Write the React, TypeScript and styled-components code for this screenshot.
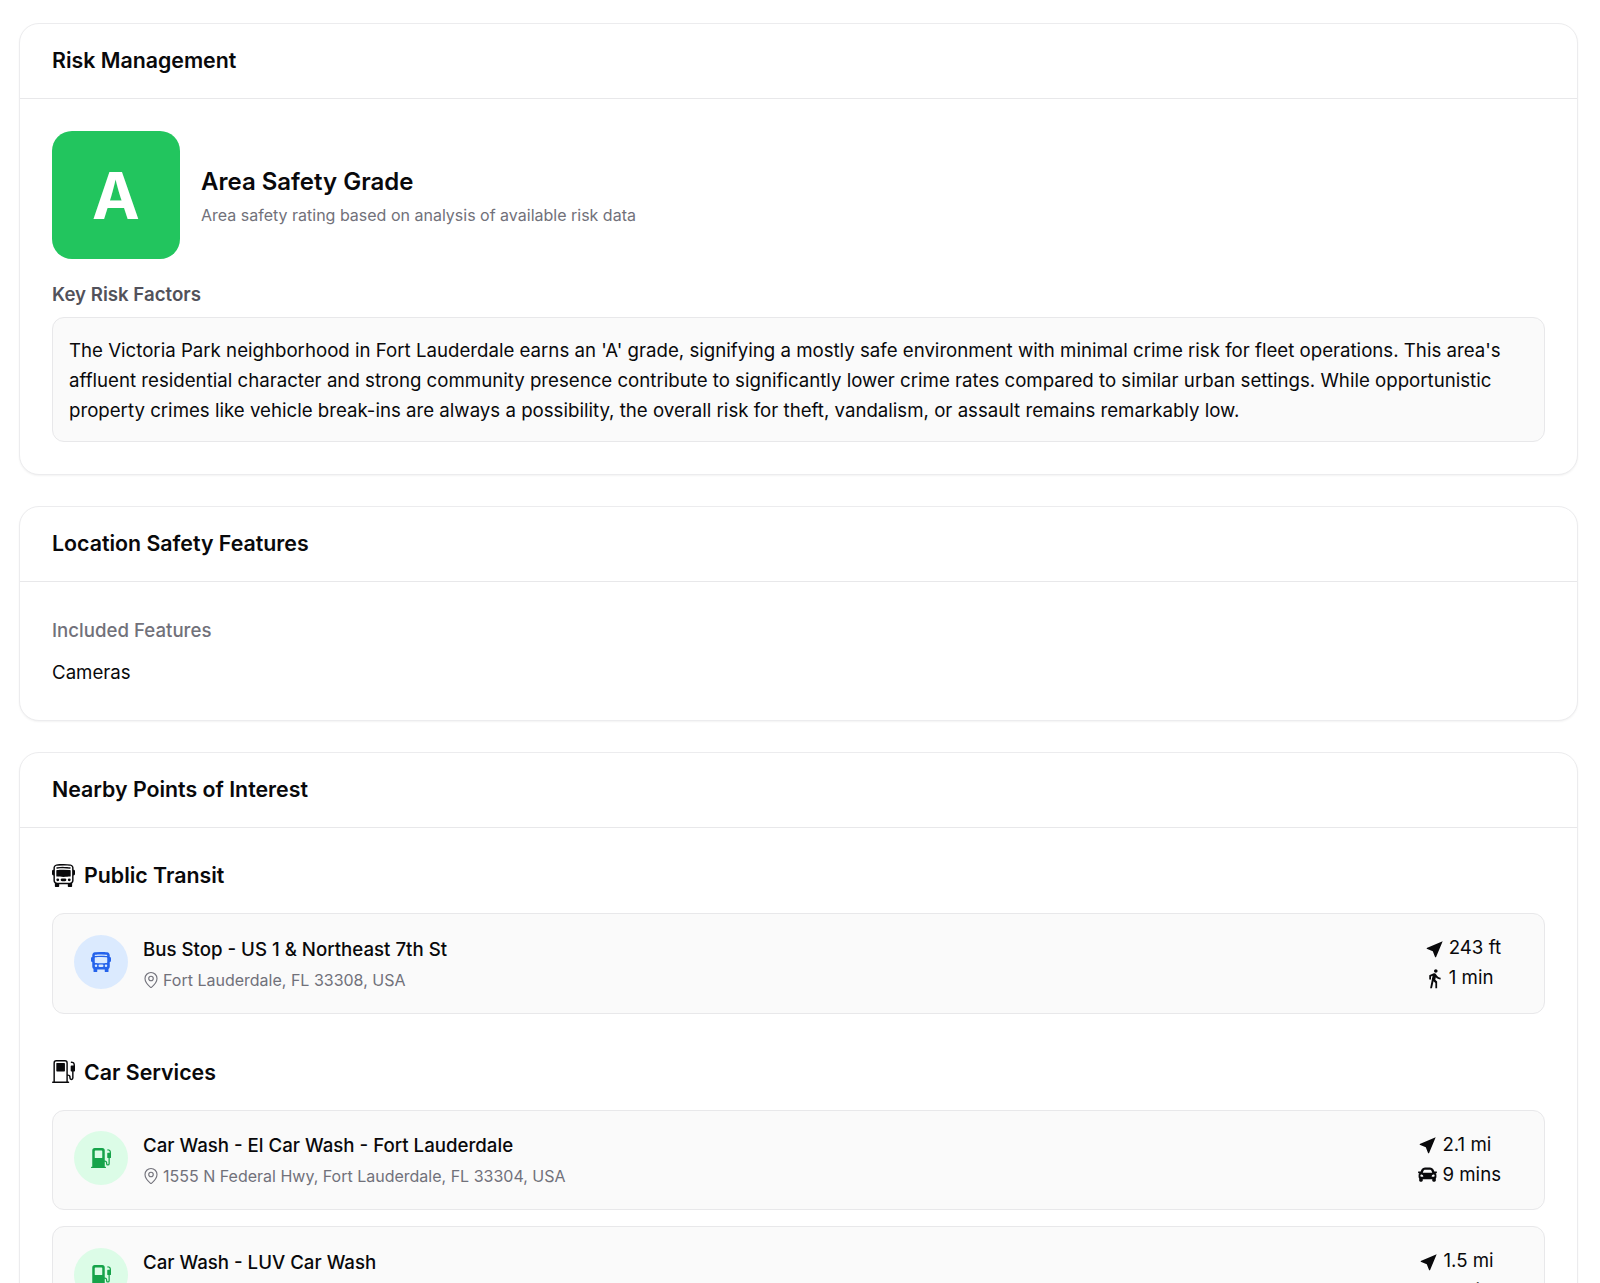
import React from "react";
import { BsBusFront, BsBusFrontFill, BsFuelPump, BsFuelPumpFill } from "react-icons/bs";
import { FaCar } from "react-icons/fa";
import { MdDirectionsWalk, MdNavigation } from "react-icons/md";
import { MapPin } from "lucide-react";
import styled, { createGlobalStyle } from "styled-components";

const GlobalStyle = createGlobalStyle`
  html, body {
    margin: 0;
    height: 1283px;
    overflow: hidden;
    background: #fff;
    font-family: Inter, "Liberation Sans", sans-serif;
    color: #09090b;
  }
  * { box-sizing: border-box; }
`;

const Page = styled.div`
  display: flex;
  flex-direction: column;
  gap: 31px;
  padding: 23px 22px 0 19px;
`;

const Card = styled.section`
  border: 1px solid #ececee;
  border-radius: 20px;
  box-shadow: 0 1px 2px rgba(0, 0, 0, 0.05);
  background: #fff;
`;

const CardHeader = styled.header`
  padding: 21px 32px;
  height: 75px;
  border-bottom: 1px solid #e8e8ea;
  font-size: 21.33px;
  line-height: 30px;
  font-weight: 600;
`;

const CardBody = styled.div`
  padding: 32px;
`;

const GradeRow = styled.div`
  display: flex;
  align-items: center;
  gap: 21px;
`;

const GradeBox = styled.div`
  width: 128px;
  height: 128px;
  border-radius: 20px;
  background: #22c55e;
  color: #fff;
  font-size: 64px;
  font-weight: 700;
  display: flex;
  align-items: center;
  justify-content: center;
`;

const GradeText = styled.div`
  padding-top: 2px;
`;

const GradeTitle = styled.div`
  font-size: 24px;
  line-height: 32px;
  font-weight: 600;
`;

const GradeNote = styled.div`
  margin-top: 5px;
  font-size: 16px;
  line-height: 24px;
  color: #71717a;
`;

const FactorsLabel = styled.div`
  margin-top: 22px;
  font-size: 18.67px;
  line-height: 28px;
  font-weight: 600;
  color: #52525b;
`;

const FactorsBox = styled.div`
  margin-top: 8px;
  padding: 18px 16px 15px 16px;
  border: 1px solid #e8e8ea;
  border-radius: 12px;
  background: #fafafa;
  font-size: 18.67px;
  line-height: 30px;
`;

const FeaturesLabel = styled.div`
  font-size: 18.67px;
  line-height: 28px;
  font-weight: 500;
  color: #71717a;
  margin-top: 3px;
`;

const FeatureValue = styled.div`
  margin: 14px 0 1px;
  font-size: 18.67px;
  line-height: 28px;
`;

const GroupTitle = styled.h3<{ $first?: boolean }>`
  display: flex;
  align-items: center;
  gap: 9px;
  margin: ${(p) => (p.$first ? "-1px" : "42px")} 0 22px;
  font-size: 21.33px;
  line-height: 32px;
  font-weight: 600;
`;

const PlaceList = styled.div`
  display: flex;
  flex-direction: column;
  gap: 16px;
`;

const Place = styled.div`
  display: flex;
  align-items: center;
  gap: 15px;
  height: 100.5px;
  padding: 0 43px 0 21px;
  border: 1px solid #e8e8ea;
  border-radius: 12px;
  background: #fafafa;
`;

const IconCircle = styled.div<{ $bg: string; $fg: string }>`
  flex: none;
  width: 54px;
  height: 54px;
  margin-bottom: 3px;
  border-radius: 50%;
  display: flex;
  align-items: center;
  justify-content: center;
  font-size: 20px;
  background: ${(p) => p.$bg};
  color: ${(p) => p.$fg};
`;

const PlaceText = styled.div`
  flex: 1;
  padding-top: 1px;
`;

const PlaceName = styled.div`
  font-size: 18.67px;
  line-height: 28px;
  font-weight: 500;
`;

const PlaceAddress = styled.div`
  display: flex;
  align-items: center;
  gap: 3px;
  margin-top: 4px;
  font-size: 16px;
  line-height: 24px;
  color: #71717a;
`;

const AddressPin = styled(MapPin)`
  margin-left: -1px;
`;

const Metrics = styled.div`
  display: grid;
  grid-template-columns: auto auto;
  column-gap: 4px;
  row-gap: 2px;
  align-items: center;
  font-size: 18.67px;
  line-height: 28px;
  justify-items: center;
`;

const MetricValue = styled.span`
  justify-self: start;
`;

const NavArrow = styled(MdNavigation)`
  transform: translate(2px, -1px) rotate(45deg);
`;

type PlaceInfo = {
  name: string;
  address: string;
  distance: string;
  duration: string;
  mode: "walk" | "car";
};

const transit: PlaceInfo[] = [
  {
    name: "Bus Stop - US 1 & Northeast 7th St",
    address: "Fort Lauderdale, FL 33308, USA",
    distance: "243 ft",
    duration: "1 min",
    mode: "walk",
  },
];

const carServices: PlaceInfo[] = [
  {
    name: "Car Wash - El Car Wash - Fort Lauderdale",
    address: "1555 N Federal Hwy, Fort Lauderdale, FL 33304, USA",
    distance: "2.1 mi",
    duration: "9 mins",
    mode: "car",
  },
  {
    name: "Car Wash - LUV Car Wash",
    address: "Fort Lauderdale, FL, USA",
    distance: "1.5 mi",
    duration: "7 mins",
    mode: "car",
  },
];

function PlaceRow({ place, icon }: { place: PlaceInfo; icon: React.ReactNode }) {
  return (
    <Place>
      {icon}
      <PlaceText>
        <PlaceName>{place.name}</PlaceName>
        <PlaceAddress>
          <AddressPin size={18} strokeWidth={1.5} />
          {place.address}
        </PlaceAddress>
      </PlaceText>
      <Metrics>
        <NavArrow size={21} />
        <MetricValue>{place.distance}</MetricValue>
        {place.mode === "walk" ? <MdDirectionsWalk size={21} /> : <FaCar size={19} />}
        <MetricValue>{place.duration}</MetricValue>
      </Metrics>
    </Place>
  );
}

export default function App() {
  return (
    <Page>
      <GlobalStyle />
      <Card>
        <CardHeader>Risk Management</CardHeader>
        <CardBody>
          <GradeRow>
            <GradeBox>A</GradeBox>
            <GradeText>
              <GradeTitle>Area Safety Grade</GradeTitle>
              <GradeNote>Area safety rating based on analysis of available risk data</GradeNote>
            </GradeText>
          </GradeRow>
          <FactorsLabel>Key Risk Factors</FactorsLabel>
          <FactorsBox>
            The Victoria Park neighborhood in Fort Lauderdale earns an 'A' grade, signifying a mostly safe
            environment with minimal crime risk for fleet operations. This area's affluent residential character
            and strong community presence contribute to significantly lower crime rates compared to similar urban
            settings. While opportunistic property crimes like vehicle break-ins are always a possibility, the
            overall risk for theft, vandalism, or assault remains remarkably low.
          </FactorsBox>
        </CardBody>
      </Card>
      <Card>
        <CardHeader>Location Safety Features</CardHeader>
        <CardBody>
          <FeaturesLabel>Included Features</FeaturesLabel>
          <FeatureValue>Cameras</FeatureValue>
        </CardBody>
      </Card>
      <Card>
        <CardHeader>Nearby Points of Interest</CardHeader>
        <CardBody>
          <GroupTitle $first>
            <BsBusFront size={23} />
            Public Transit
          </GroupTitle>
          <PlaceList>
            {transit.map((p) => (
              <PlaceRow
                key={p.name}
                place={p}
                icon={
                  <IconCircle $bg="#dbeafe" $fg="#2563eb">
                    <BsBusFrontFill />
                  </IconCircle>
                }
              />
            ))}
          </PlaceList>
          <GroupTitle>
            <BsFuelPump size={23} />
            Car Services
          </GroupTitle>
          <PlaceList>
            {carServices.map((p) => (
              <PlaceRow
                key={p.name}
                place={p}
                icon={
                  <IconCircle $bg="#dcfce7" $fg="#16a34a">
                    <BsFuelPumpFill />
                  </IconCircle>
                }
              />
            ))}
          </PlaceList>
        </CardBody>
      </Card>
    </Page>
  );
}
